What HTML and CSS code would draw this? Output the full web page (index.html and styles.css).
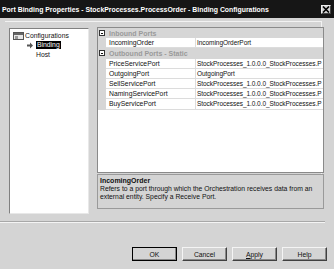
FILE: index.html
```html
<!DOCTYPE html>
<html>
<head>
<meta charset="utf-8">
<link rel="stylesheet" href="styles.css">
</head>
<body>
<div class="window">
  <div class="titlebar">
    <span class="title">Port Binding Properties - StockProcesses.ProcessOrder - Binding Configurations</span>
    <span class="close"><svg width="8" height="7" viewBox="0 0 8 7"><path d="M1 0.5 L7 6.5 M7 0.5 L1 6.5" stroke="#000" stroke-width="1.6"/></svg></span>
  </div>
  <div class="client">
    <div class="frame">
      <div class="tree">
        <div class="node root">
          <svg class="ico" width="11" height="8" viewBox="0 0 11 8"><rect x="0.5" y="0.5" width="10" height="7" fill="#e8e8e8" stroke="#555"/><rect x="1" y="1" width="9" height="2" fill="#666"/><rect x="2" y="4" width="3" height="3" fill="#999"/></svg>
          <span>Configurations</span>
        </div>
        <div class="node child">
          <svg class="arrow" width="6" height="7" viewBox="0 0 6 7"><path d="M0 2.5 H3 V0.5 L6 3.5 L3 6.5 V4.5 H0 Z" fill="#555"/></svg>
          <span class="sel">Binding</span>
        </div>
        <div class="node child leaf"><span>Host</span></div>
      </div>
      <div class="right">
        <div class="grid">
          <div class="row cat"><span class="gut"><i class="box"></i></span><span class="catname">Inbound Ports</span></div>
          <div class="row"><span class="gut"></span><span class="name">IncomingOrder</span><span class="val">IncomingOrderPort</span></div>
          <div class="row cat"><span class="gut"><i class="box"></i></span><span class="catname">Outbound Ports - Static</span></div>
          <div class="row"><span class="gut"></span><span class="name">PriceServicePort</span><span class="val">StockProcesses_1.0.0.0_StockProcesses.P</span></div>
          <div class="row"><span class="gut"></span><span class="name">OutgoingPort</span><span class="val">OutgoingPort</span></div>
          <div class="row"><span class="gut"></span><span class="name">SellServicePort</span><span class="val">StockProcesses_1.0.0.0_StockProcesses.P</span></div>
          <div class="row"><span class="gut"></span><span class="name">NamingServicePort</span><span class="val">StockProcesses_1.0.0.0_StockProcesses.P</span></div>
          <div class="row last"><span class="gut"></span><span class="name">BuyServicePort</span><span class="val">StockProcesses_1.0.0.0_StockProcesses.P</span></div>
        </div>
        <div class="desc">
          <div class="dtitle">IncomingOrder</div>
          <div class="dtext">Refers to a port through which the Orchestration receives data from an external entity. Specify a Receive Port.</div>
        </div>
      </div>
    </div>
    <div class="sep"></div>
    <div class="buttons">
      <span class="btn default">OK</span>
      <span class="btn">Cancel</span>
      <span class="btn"><u>A</u>pply</span>
      <span class="btn">Help</span>
    </div>
  </div>
</div>
</body>
</html>
```

FILE: styles.css
```css
html, body {
  margin: 0;
  padding: 0;
  background: #d4d4d4;
}
.window {
  width: 334px;
  height: 269px;
  display: flex;
  flex-direction: column;
  font-family: "Liberation Sans", Arial, sans-serif;
  font-size: 6.8px;
  color: #111;
  overflow: hidden;
}
.titlebar {
  height: 18px;
  background: #161616;
  display: flex;
  align-items: center;
  padding-left: 2px;
  padding-right: 3px;
}
.title {
  flex: 1;
  color: #fff;
  font-weight: bold;
  font-size: 6.9px;
  white-space: nowrap;
}
.close {
  width: 10px;
  height: 9px;
  background: #d4d4d4;
  display: flex;
  align-items: center;
  justify-content: center;
  box-sizing: border-box;
  border: 1px solid #f0f0f0;
  border-right-color: #444;
  border-bottom-color: #444;
}
.client {
  flex: 1;
  display: flex;
  flex-direction: column;
  padding-top: 3px;
}
.frame {
  margin-left: 5px;
  width: 317px;
  border-top: 1px solid #f2f2f2;
  border-right: 1px solid #f2f2f2;
  padding-top: 5px;
  padding-left: 4px;
  display: flex;
  gap: 8px;
  height: 188px;
  box-sizing: border-box;
}
.tree {
  flex: none;
  width: 80px;
  margin-top: 1px;
  height: 186px;
  box-sizing: border-box;
  background: #fff;
  border: 1px solid #808080;
  border-right-color: #e8e8e8;
  border-bottom-color: #e8e8e8;
  padding-top: 2px;
  overflow: hidden;
}
.node {
  height: 9.5px;
  display: flex;
  align-items: center;
  white-space: nowrap;
}
.root {
  padding-left: 3px;
  gap: 1px;
}
.child {
  padding-left: 17px;
}
.arrow {
  margin-right: 3px;
}
.leaf {
  padding-left: 26px;
}
.sel {
  background: #000;
  color: #fff;
  padding: 0 1px;
  line-height: 8px;
}
.right {
  flex: 1;
  min-width: 0;
  margin-right: -3px;
  display: flex;
  flex-direction: column;
  gap: 1px;
}
.grid {
  height: 152px;
  box-sizing: border-box;
  background: #fff;
  border: 1px solid #8a8a8a;
}
.row {
  height: 10.2px;
  display: flex;
  align-items: stretch;
  white-space: nowrap;
  overflow: hidden;
}
.gut {
  width: 8px;
  flex: none;
  background: #d6d6d6;
  display: flex;
  align-items: center;
  justify-content: center;
}
.box {
  display: block;
  width: 6px;
  height: 6px;
  border: 1px solid #333;
  box-sizing: border-box;
  position: relative;
  background: #fff;
}
.box::after {
  content: "";
  position: absolute;
  left: 1px;
  right: 1px;
  top: 2px;
  height: 1px;
  background: #111;
}
.cat {
  background: #d6d6d6;
}
.catname {
  font-weight: bold;
  color: #9a9a9a;
  padding-left: 3px;
  display: flex;
  align-items: center;
  font-size: 7px;
}
.name {
  width: 90px;
  flex: none;
  box-sizing: border-box;
  padding-left: 3px;
  border-right: 1px solid #dcdcdc;
  border-bottom: 1px solid #dcdcdc;
  display: flex;
  align-items: center;
}
.val {
  flex: 1;
  min-width: 0;
  padding-left: 1px;
  border-bottom: 1px solid #dcdcdc;
  display: flex;
  align-items: center;
  overflow: hidden;
  font-size: 6.5px;
  letter-spacing: -0.05px;
}
.desc {
  height: 36px;
  box-sizing: border-box;
  border: 1px solid #9a9a9a;
  background: #d4d4d4;
  padding: 2px 2px 0 2px;
}
.dtitle {
  font-weight: bold;
  font-size: 7px;
  line-height: 8px;
}
.dtext {
  line-height: 7.5px;
  width: 218px;
}
.sep {
  margin-top: 12px;
  width: 325px;
  height: 0;
  border-top: 1px solid #a8a8a8;
  border-bottom: 1px solid #f4f4f4;
}
.buttons {
  display: flex;
  justify-content: flex-end;
  gap: 5px;
  padding-right: 7px;
  margin-top: 24px;
}
.btn {
  width: 45px;
  height: 14px;
  box-sizing: border-box;
  display: flex;
  align-items: center;
  justify-content: center;
  background: #d4d4d4;
  border: 1px solid #f4f4f4;
  border-right-color: #404040;
  border-bottom-color: #404040;
  box-shadow: inset -1px -1px 0 #888;
}
.default {
  outline: 1px solid #000;
  outline-offset: -1px;
}
u {
  text-decoration: underline;
}
```
